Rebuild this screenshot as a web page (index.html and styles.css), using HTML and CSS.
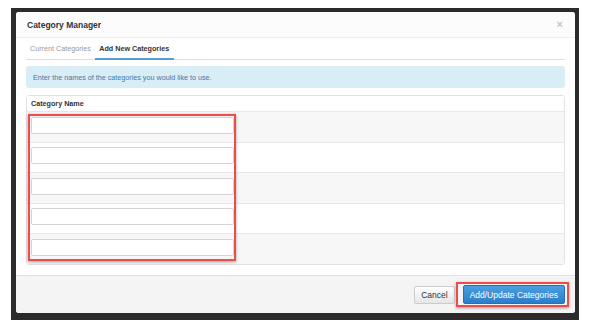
FILE: index.html
```html
<!DOCTYPE html>
<html lang="en">
<head>
    <meta charset="UTF-8">
    <meta name="viewport" content="width=device-width, initial-scale=1.0">
    <title>Category Manager</title>
    <link rel="stylesheet" href="styles.css">
</head>
<body>
    <div class="backdrop">
        <div class="modal">
            <div class="modal-header">
                <div class="modal-title">Category Manager</div>
                <span class="close">&times;</span>
            </div>
            <div class="modal-body">
                <div class="tabs">
                    <div class="tab">Current Categories</div>
                    <div class="tab active">Add New Categories</div>
                </div>
                <div class="alert">Enter the names of the categories you would like to use.</div>
                <div class="panel">
                    <div class="panel-head">Category Name</div>
                    <div class="row"><input type="text"></div>
                    <div class="row"><input type="text"></div>
                    <div class="row"><input type="text"></div>
                    <div class="row"><input type="text"></div>
                    <div class="row"><input type="text"></div>
                    <div class="mark mark-inputs"></div>
                </div>
            </div>
            <div class="modal-footer">
                <button class="btn">Cancel</button>
                <button class="btn btn-primary">Add/Update Categories</button>
                <div class="mark mark-button"></div>
            </div>
        </div>
    </div>
</body>
</html>
```

FILE: styles.css
```css
body {
    margin: 0;
    background-color: white;
    font-family: "Liberation Sans", Arial, sans-serif;
    color: #333;
}
.backdrop {
    margin: 8px 17px 0 11px;
    padding: 4px 4px 7px 5px;
    background-color: #2b2b2b;
}
.modal {
    display: flex;
    flex-direction: column;
    height: 301px;
    background-color: white;
    border-radius: 3px;
    overflow: hidden;
    position: relative;
}
.modal-header {
    display: flex;
    align-items: center;
    justify-content: space-between;
    height: 25px;
    padding: 0 12px 0 11px;
    background-color: #fcfcfc;
    border-bottom: 1px solid #eee;
}
.modal-title {
    font-size: 8.5px;
    font-weight: bold;
    color: #333;
}
.close {
    font-size: 11px;
    font-weight: bold;
    color: #c4c4c4;
    line-height: 1;
}
.modal-body {
    flex-grow: 1;
    padding: 0 10px;
}
.tabs {
    display: flex;
    border-bottom: 1px solid #ddd;
    padding-left: 0;
}
.tab {
    font-size: 7.2px;
    line-height: 11px;
    padding: 5px 4.5px 5px 4px;
    color: #999;
}
.tab.active {
    color: #333;
    font-weight: bold;
    border-bottom: 2px solid #5b9bd5;
    margin-bottom: -1px;
    padding-bottom: 4px;
}
.alert {
    margin-top: 6px;
    height: 22px;
    display: flex;
    align-items: center;
    padding-left: 7px;
    background-color: #d9edf7;
    color: #3c7ba6;
    font-size: 7.2px;
    border-radius: 3px;
}
.panel {
    position: relative;
    margin-top: 7px;
    border: 1px solid #e3e3e3;
    border-radius: 3px;
}
.panel-head {
    height: 15px;
    display: flex;
    align-items: center;
    padding-left: 4px;
    font-size: 7.2px;
    font-weight: bold;
    background-color: white;
}
.row {
    border-top: 1px solid #e8e8e8;
    padding: 4.5px 4px 8px 4px;
}
.row:nth-child(even) {
    background-color: #f7f7f7;
}
.row input {
    display: block;
    box-sizing: border-box;
    width: 203px;
    height: 17px;
    margin: 0;
    border: 1px solid #d4d4d4;
    border-radius: 2px;
    background-color: white;
}
.modal-footer {
    position: relative;
    display: flex;
    justify-content: flex-end;
    align-items: center;
    gap: 8px;
    margin-top: 10px;
    height: 37px;
    padding: 0 10px;
    background-color: #f4f4f4;
    border-top: 1px solid #e3e3e3;
}
.btn {
    font-family: "Liberation Sans", Arial, sans-serif;
    font-size: 8.5px;
    height: 18px;
    padding: 0 6px;
    border: 1px solid #ccc;
    border-radius: 2px;
    color: #333;
    background: linear-gradient(#ffffff, #e6e6e6);
}
.btn-primary {
    height: 19px;
    padding: 0 6px;
    color: white;
    border-color: #2a6fb5;
    background: linear-gradient(#4a9fe2, #2b7dca);
}
.mark {
    position: absolute;
    border: 2px solid #ee4b4b;
    box-shadow: 0 1px 3px rgba(0, 0, 0, 0.35);
}
.mark-inputs {
    left: 1px;
    top: 18px;
    width: 204px;
    height: 143px;
}
.mark-button {
    right: 6px;
    top: 6px;
    width: 109px;
    height: 21px;
}
```
